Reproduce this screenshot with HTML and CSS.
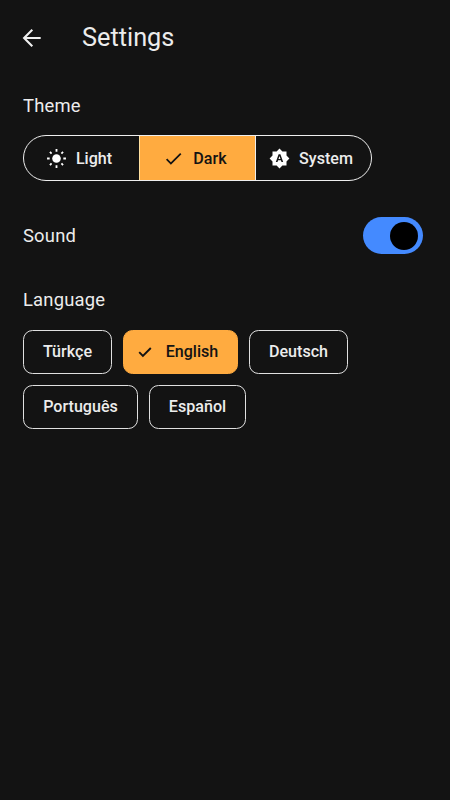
FILE: index.html
```html
<!DOCTYPE html>
<html lang="en">
<head>
<meta charset="utf-8">
<title>Settings</title>
<link rel="stylesheet" href="styles.css">
</head>
<body>
<header class="bar">
  <svg class="back" viewBox="0 0 24 24"><path d="M20.7 12H4M12.3 3.8L4.1 12l8.2 8.2"/></svg>
  <h1>Settings</h1>
</header>
<main>
  <h2>Theme</h2>
  <div class="segments">
    <div class="segment">
      <svg class="icon sun" viewBox="0 0 24 24"><circle cx="12" cy="12" r="4.9"/><path d="M12 1.2v3M12 19.8v3M1.2 12h3M19.8 12h3M4.5 4.5l1.9 1.9M17.6 17.6l1.9 1.9M4.5 19.5l1.9-1.9M17.6 6.4l1.9-1.9"/></svg>
      <span>Light</span>
    </div>
    <div class="segment selected">
      <svg class="icon" viewBox="0 0 24 24"><path d="M9 16.17L4.83 12l-1.42 1.41L9 19 21 7l-1.41-1.41z"/></svg>
      <span>Dark</span>
    </div>
    <div class="segment">
      <svg class="icon" viewBox="0 0 24 24"><path d="M10.85 12.65h2.3L12 9l-1.15 3.65zM20 8.69V4h-4.69L12 .69 8.69 4H4v4.69L.69 12 4 15.31V20h4.69L12 23.31 15.31 20H20v-4.69L23.31 12 20 8.69zM14.3 16l-.7-2h-3.2l-.7 2H7.8L11 7h2l3.2 9h-1.9z"/></svg>
      <span>System</span>
    </div>
  </div>
  <div class="sound">
    <h2>Sound</h2>
    <div class="switch"><div class="thumb"></div></div>
  </div>
  <h2>Language</h2>
  <div class="chips">
    <div class="chip turkish">Türkçe</div>
    <div class="chip english chosen"><svg class="tick" viewBox="0 0 14 12"><path d="M1.2 6.2l3.7 3.7 7.9-7.9"/></svg>English</div>
    <div class="chip german">Deutsch</div>
    <div class="chip portuguese">Português</div>
    <div class="chip spanish">Español</div>
  </div>
</main>
</body>
</html>
```
FILE: styles.css
```css
* { box-sizing: border-box; }
body {
  margin: 0;
  min-height: 800px;
  background: #131313;
  color: #ececec;
  font-family: Roboto, sans-serif;
}
.bar { display: flex; align-items: center; height: 74px; padding: 1px 0 0 20px; }
.back { width: 24px; height: 24px; margin-right: 38px; fill: none; stroke: #f0f0f0; stroke-width: 2.1; }
h1 { margin: 0; font-size: 25.3px; font-weight: 400; line-height: 30px; }
main { padding: 20px 27px 0 23px; }
h2 { margin: 0; font-size: 18.4px; font-weight: 400; line-height: 24px; letter-spacing: 0.2px; }
.segments {
  display: flex;
  width: 349px;
  height: 46px;
  margin-top: 17px;
  border: 1.5px solid #eee;
  border-radius: 23px;
  overflow: hidden;
}
.segment {
  flex: 1;
  display: flex;
  align-items: center;
  justify-content: center;
  gap: 9px;
  padding-right: 5px;
  font-size: 16.1px;
  font-weight: 500;
}
.segment + .segment { border-left: 1px solid #eee; }
.segment.selected { background: #ffab40; color: #131313; border-color: #ffe0a0; }
.icon { width: 21px; height: 21px; fill: currentColor; }
.segment:not(.selected) .icon { color: #fff; }
.sun path { stroke: currentColor; stroke-width: 2.1; }
.sound { display: flex; align-items: center; justify-content: space-between; height: 38px; margin: 36px 0 33px; }
.switch {
  display: flex;
  align-items: center;
  justify-content: flex-end;
  width: 60px;
  height: 37px;
  margin-bottom: 1px;
  padding-right: 5px;
  border-radius: 19px;
  background: #448aff;
}
.thumb { width: 28px; height: 28px; border-radius: 50%; background: #000; }
.chips { display: flex; flex-wrap: wrap; gap: 11px 11px; margin-top: 17.5px; }
.chip {
  display: flex;
  align-items: center;
  justify-content: center;
  height: 44px;
  border: 1px solid #e0e0e0;
  border-radius: 9.5px;
  font-size: 16.1px;
  font-weight: 500;
}
.turkish { width: 89px; }
.english { width: 115px; }
.german { width: 99px; }
.portuguese { width: 115px; }
.spanish { width: 97px; }
.chosen { gap: 14px; padding-right: 5px; background: #ffab40; border-color: #ffab40; color: #131313; }
.tick { width: 14px; height: 12px; fill: none; stroke: currentColor; stroke-width: 1.9; }
```
